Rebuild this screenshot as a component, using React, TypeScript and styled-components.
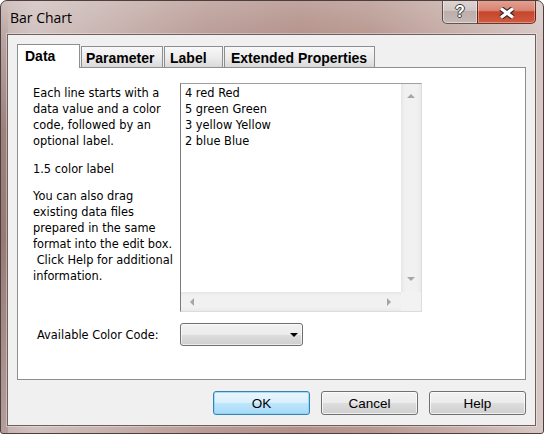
import React from "react";
import styled, { createGlobalStyle } from "styled-components";

const GlobalStyle = createGlobalStyle`
  html, body { margin: 0; padding: 0; background: #ffffff; }
  #root { width: 544px; height: 434px; }
  *, *::before, *::after { box-sizing: border-box; }
`;

const Window = styled.div`
  width: 544px;
  height: 434px;
  display: flex;
  flex-direction: column;
  padding: 0 7px 7px 6px;
  border: 1px solid #4d3f3d;
  border-radius: 7px 7px 3px 3px;
  overflow: hidden;
  background:
    linear-gradient(180deg, rgba(80,35,30,0) 0, rgba(80,35,30,0.35) 30%, rgba(80,35,30,0.4) 55%, rgba(80,35,30,0.15) 100%) left top / 7px 100% no-repeat,
    linear-gradient(180deg, rgba(255,255,255,0.18) 0, rgba(255,255,255,0) 40px),
    linear-gradient(90deg, #c4b2af 0, #d0c1bf 6%, #c5afab 22%, #b99b95 38%, #b3918a 55%, #b89890 68%, #c5aba5 82%, #d0bcb8 94%, #d8c9c6 100%);
`;

const TitleBar = styled.div`
  height: 33px;
  flex-shrink: 0;
  display: flex;
  align-items: flex-start;
`;

const Title = styled.div`
  font-family: "Open Sans", "Noto Sans", sans-serif;
  font-size: 14px;
  line-height: 18px;
  color: #000;
  padding: 8px 0 0 3px;
`;

const Caption = styled.div`
  margin-left: auto;
  margin-top: -1px;
  display: flex;
`;

const HelpBtn = styled.div`
  width: 35px;
  height: 24px;
  border: 1px solid rgba(45, 30, 30, 0.7);
  border-top: none;
  border-right: none;
  border-radius: 0 0 0 5px;
  background: linear-gradient(180deg, #ded6d5 0%, #d2c6c4 45%, #bcaeab 50%, #c6b8b5 100%);
  box-shadow: inset 0 0 0 1px rgba(255,255,255,0.45);
  display: flex;
  justify-content: center;
  padding-top: 2px;
  font: bold 16px/20px "Liberation Sans", Arial, sans-serif;
  color: #fff;
  text-shadow: 1px 0 0 #3a3a3a, -1px 0 0 #3a3a3a, 0 1px 0 #3a3a3a, 0 -1px 0 #3a3a3a;
`;

const CloseBtn = styled.div`
  width: 59px;
  height: 24px;
  border: 1px solid rgba(60, 20, 15, 0.75);
  border-top: none;
  border-radius: 0 0 5px 0;
  background: linear-gradient(180deg, #e3a495 0%, #d98372 45%, #c7452b 52%, #cf5b40 100%);
  box-shadow: inset 0 0 0 1px rgba(255,210,200,0.45);
  display: flex;
  justify-content: center;
  align-items: center;
  padding-top: 2px;
`;

const Client = styled.div`
  flex: 1;
  display: flex;
  flex-direction: column;
  background: #f0f0f0;
  border: 1px solid #6f605e;
  box-shadow: 0 0 0 1px rgba(255,255,255,0.35);
  padding: 9px 9px 0 9px;
`;

const TabStrip = styled.div`
  display: flex;
  align-items: flex-end;
  gap: 1px;
  height: 24px;
  margin-bottom: -1px;
  position: relative;
  z-index: 1;
`;

const Tab = styled.div<{ $active?: boolean; $w: number; $pad: number }>`
  width: ${(p) => p.$w}px;
  height: ${(p) => (p.$active ? 24 : 21)}px;
  margin-bottom: ${(p) => (p.$active ? 0 : 1)}px;
  padding: 3px 0 0 ${(p) => p.$pad}px;
  border: 1px solid #8c8e94;
  border-bottom: none;
  background: ${(p) =>
    p.$active ? "#ffffff" : "linear-gradient(180deg, #f8f8f8 0%, #ebebeb 55%, #d9d9d9 100%)"};
  font: bold 14px/16px "Liberation Sans", Arial, sans-serif;
  color: #000;
  white-space: nowrap;
`;

const Panel = styled.div`
  height: 313px;
  border: 1px solid #8c8e94;
  background: #fff;
  padding: 15px 0 0 15px;
  display: grid;
  grid-template-columns: 147px 242px;
  grid-template-rows: 229px 23px;
  row-gap: 11px;
  align-content: start;
`;

const Notes = styled.div`
  margin-top: 2px;
  font-family: "DejaVu Sans", Verdana, sans-serif;
  font-size: 11.4px;
  line-height: 16px;
  color: #000;
  white-space: nowrap;
`;

const Para = styled.p<{ $gap?: number }>`
  margin: ${(p) => p.$gap ?? 0}px 0 0 0;
`;

const TextBox = styled.div`
  display: grid;
  grid-template-columns: 220px 20px;
  grid-template-rows: 208px 19px;
  border-top: 1px solid #a0a0a0;
  border-left: 1px solid #7a7a7a;
  border-right: 1px solid #dcdcdc;
  border-bottom: 1px solid #dcdcdc;
  background: #fff;
`;

const TextContent = styled.div`
  padding: 1px 3px 1px 4px;
  font-family: "DejaVu Sans", Verdana, sans-serif;
  font-size: 11.4px;
  line-height: 16px;
  color: #000;
  white-space: nowrap;
`;

const VScroll = styled.div`
  display: flex;
  flex-direction: column;
  justify-content: space-between;
  align-items: center;
  padding: 10px 0 11px 0;
  background: linear-gradient(90deg, #e6e6e6 0%, #f1f1f1 20%, #f1f1f1 80%, #e9e9e9 100%);
`;

const HScroll = styled.div`
  display: flex;
  justify-content: space-between;
  align-items: center;
  padding: 0 10px 0 9px;
  background: linear-gradient(180deg, #e6e6e6 0%, #f1f1f1 20%, #f1f1f1 80%, #e9e9e9 100%);
`;

const Corner = styled.div`
  background: #f2f2f2;
`;

const Arrow = styled.span<{ $dir: "up" | "down" | "left" | "right"; $color?: string }>`
  width: 0;
  height: 0;
  border-style: solid;
  border-color: transparent;
  ${(p) => {
    const c = p.$color ?? "#a6a6a6";
    switch (p.$dir) {
      case "up":
        return `border-width: 0 4px 4px 4px; border-bottom-color: ${c};`;
      case "down":
        return `border-width: 4px 4px 0 4px; border-top-color: ${c};`;
      case "left":
        return `border-width: 4px 4px 4px 0; border-right-color: ${c};`;
      default:
        return `border-width: 4px 0 4px 4px; border-left-color: ${c};`;
    }
  }}
`;

const FieldLabel = styled.div`
  align-self: center;
  padding-left: 4px;
  font-family: "DejaVu Sans", Verdana, sans-serif;
  font-size: 11.4px;
  line-height: 16px;
  color: #000;
  white-space: nowrap;
`;

const Select = styled.div`
  width: 123px;
  height: 23px;
  border: 1px solid #707070;
  border-radius: 3px;
  background: linear-gradient(180deg, #f2f2f2 0%, #ebebeb 50%, #dddddd 51%, #cfcfcf 100%);
  box-shadow: inset 0 0 0 1px rgba(255,255,255,0.6);
  display: flex;
  justify-content: flex-end;
  align-items: center;
  padding: 1px 4px 0 0;
`;

const ButtonRow = styled.div`
  display: flex;
  justify-content: flex-end;
  gap: 11px;
  margin-top: 11px;
`;

const Button = styled.div<{ $default?: boolean }>`
  width: 97px;
  height: 24px;
  border: 1px solid ${(p) => (p.$default ? "#3c7fb1" : "#707070")};
  border-radius: 3px;
  background: ${(p) =>
    p.$default
      ? "linear-gradient(180deg, #eaf6fd 0%, #d9f0fc 50%, #bee6fd 51%, #a7d9f5 100%)"
      : "linear-gradient(180deg, #f2f2f2 0%, #ebebeb 50%, #dddddd 51%, #cfcfcf 100%)"};
  box-shadow: inset 0 0 0 1px ${(p) => (p.$default ? "rgba(120,215,250,0.7)" : "rgba(255,255,255,0.7)")};
  display: flex;
  justify-content: center;
  align-items: center;
  font-family: "Liberation Sans", Arial, sans-serif;
  font-size: 13.5px;
  color: #000;
`;

const CloseGlyph = () => (
  <svg width="16" height="12" viewBox="0 0 16 12">
    <path d="M2 1.5 L14 10.5 M14 1.5 L2 10.5" stroke="#3a2a28" strokeWidth="5.5" fill="none" />
    <path d="M2 1.5 L14 10.5 M14 1.5 L2 10.5" stroke="#ffffff" strokeWidth="3.2" fill="none" />
  </svg>
);

const tabs = [
  { label: "Data", w: 63, pad: 7, active: true },
  { label: "Parameter", w: 82, pad: 4 },
  { label: "Label", w: 59, pad: 5 },
  { label: "Extended Properties", w: 151, pad: 6 },
];

export default function App() {
  return (
    <>
      <GlobalStyle />
      <Window>
        <TitleBar>
          <Title>Bar Chart</Title>
          <Caption>
            <HelpBtn>?</HelpBtn>
            <CloseBtn>
              <CloseGlyph />
            </CloseBtn>
          </Caption>
        </TitleBar>
        <Client>
          <TabStrip>
            {tabs.map((t) => (
              <Tab key={t.label} $active={t.active} $w={t.w} $pad={t.pad}>
                {t.label}
              </Tab>
            ))}
          </TabStrip>
          <Panel>
            <Notes>
              <Para>
                Each line starts with a<br />
                data value and a color<br />
                code, followed by an<br />
                optional label.
              </Para>
              <Para $gap={12}>1.5 color label</Para>
              <Para $gap={11}>
                You can also drag<br />
                existing data files<br />
                prepared in the same<br />
                format into the edit box.<br />
                {"\u00a0"}Click Help for additional<br />
                information.
              </Para>
            </Notes>
            <TextBox>
              <TextContent>
                <div>4 red Red</div>
                <div>5 green Green</div>
                <div>3 yellow Yellow</div>
                <div>2 blue Blue</div>
              </TextContent>
              <VScroll>
                <Arrow $dir="up" />
                <Arrow $dir="down" />
              </VScroll>
              <HScroll>
                <Arrow $dir="left" />
                <Arrow $dir="right" />
              </HScroll>
              <Corner />
            </TextBox>
            <FieldLabel>Available Color Code:</FieldLabel>
            <Select>
              <Arrow $dir="down" $color="#000" />
            </Select>
          </Panel>
          <ButtonRow>
            <Button $default>OK</Button>
            <Button>Cancel</Button>
            <Button>Help</Button>
          </ButtonRow>
        </Client>
      </Window>
    </>
  );
}
